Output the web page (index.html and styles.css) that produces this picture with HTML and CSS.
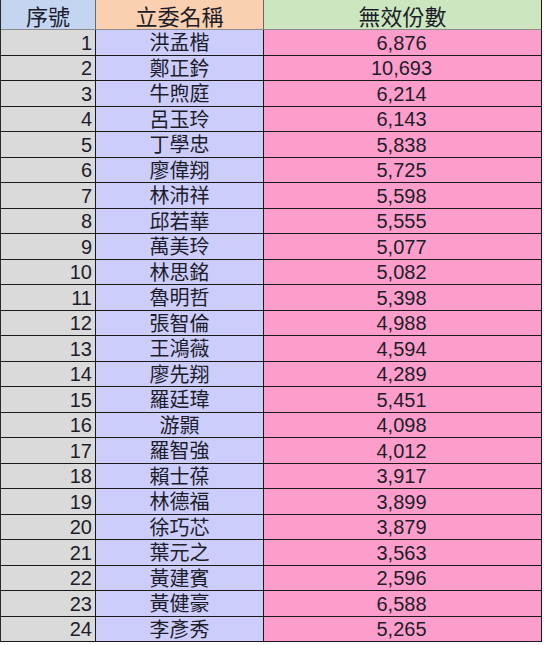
FILE: index.html
```html
<!DOCTYPE html>
<html lang="zh-Hant">
<head>
<meta charset="utf-8">
<title>無效份數</title>
<link rel="stylesheet" href="styles.css">
</head>
<body>
<div class="sheet">
  <div class="cell h1">序號</div>
  <div class="cell h2">立委名稱</div>
  <div class="cell h3">無效份數</div>

  <div class="cell c1">1</div><div class="cell c2">洪孟楷</div><div class="cell c3">6,876</div>
  <div class="cell c1">2</div><div class="cell c2">鄭正鈐</div><div class="cell c3">10,693</div>
  <div class="cell c1">3</div><div class="cell c2">牛煦庭</div><div class="cell c3">6,214</div>
  <div class="cell c1">4</div><div class="cell c2">呂玉玲</div><div class="cell c3">6,143</div>
  <div class="cell c1">5</div><div class="cell c2">丁學忠</div><div class="cell c3">5,838</div>
  <div class="cell c1">6</div><div class="cell c2">廖偉翔</div><div class="cell c3">5,725</div>
  <div class="cell c1">7</div><div class="cell c2">林沛祥</div><div class="cell c3">5,598</div>
  <div class="cell c1">8</div><div class="cell c2">邱若華</div><div class="cell c3">5,555</div>
  <div class="cell c1">9</div><div class="cell c2">萬美玲</div><div class="cell c3">5,077</div>
  <div class="cell c1">10</div><div class="cell c2">林思銘</div><div class="cell c3">5,082</div>
  <div class="cell c1">11</div><div class="cell c2">魯明哲</div><div class="cell c3">5,398</div>
  <div class="cell c1">12</div><div class="cell c2">張智倫</div><div class="cell c3">4,988</div>
  <div class="cell c1">13</div><div class="cell c2">王鴻薇</div><div class="cell c3">4,594</div>
  <div class="cell c1">14</div><div class="cell c2">廖先翔</div><div class="cell c3">4,289</div>
  <div class="cell c1">15</div><div class="cell c2">羅廷瑋</div><div class="cell c3">5,451</div>
  <div class="cell c1">16</div><div class="cell c2">游顥</div><div class="cell c3">4,098</div>
  <div class="cell c1">17</div><div class="cell c2">羅智強</div><div class="cell c3">4,012</div>
  <div class="cell c1">18</div><div class="cell c2">賴士葆</div><div class="cell c3">3,917</div>
  <div class="cell c1">19</div><div class="cell c2">林德福</div><div class="cell c3">3,899</div>
  <div class="cell c1">20</div><div class="cell c2">徐巧芯</div><div class="cell c3">3,879</div>
  <div class="cell c1">21</div><div class="cell c2">葉元之</div><div class="cell c3">3,563</div>
  <div class="cell c1">22</div><div class="cell c2">黃建賓</div><div class="cell c3">2,596</div>
  <div class="cell c1">23</div><div class="cell c2">黃健豪</div><div class="cell c3">6,588</div>
  <div class="cell c1">24</div><div class="cell c2">李彥秀</div><div class="cell c3">5,265</div>
</div>
</body>
</html>
```
FILE: styles.css
```css
html, body {
  margin: 0;
  padding: 0;
  background: #ffffff;
}
.sheet {
  display: grid;
  grid-template-columns: 95px 168px 278px;
  grid-template-rows: 30px;
  grid-auto-rows: 25.5px;
  width: 542px;
  box-sizing: border-box;
  border-left: 1px solid #2a2a2a;
  font-family: "Liberation Sans", "Noto Sans CJK TC", sans-serif;
  color: #1d1d2a;
}
.cell {
  box-sizing: border-box;
  border-right: 1px solid #1a1a1a;
  border-bottom: 1px solid #1a1a1a;
  display: flex;
  align-items: center;
  font-size: 20px;
  line-height: 1;
  white-space: nowrap;
}
.h1, .h2, .h3 {
  justify-content: center;
  font-family: "Noto Sans CJK TC", sans-serif;
  font-size: 22px;
  border-bottom-color: #8a8a8a;
  border-right-color: #6a6a6a;
  padding-top: 1px;
}
.h1 { background: #c3d5f1; }
.h2 { background: #fad0b0; }
.h3 { background: #cce7bf; border-right-color: #1a1a1a; }
.c1 {
  background: #dadada;
  justify-content: flex-end;
  padding-right: 3px;
  font-size: 20px;
  padding-top: 1px;
}
.c2 {
  background: #cdcdfc;
  justify-content: center;
  font-family: "Noto Sans CJK TC", sans-serif;
  font-size: 20px;
}
.c3 {
  background: #fd9dcb;
  justify-content: center;
  font-size: 20px;
  padding-top: 1px;
  padding-right: 2px;
}
```
